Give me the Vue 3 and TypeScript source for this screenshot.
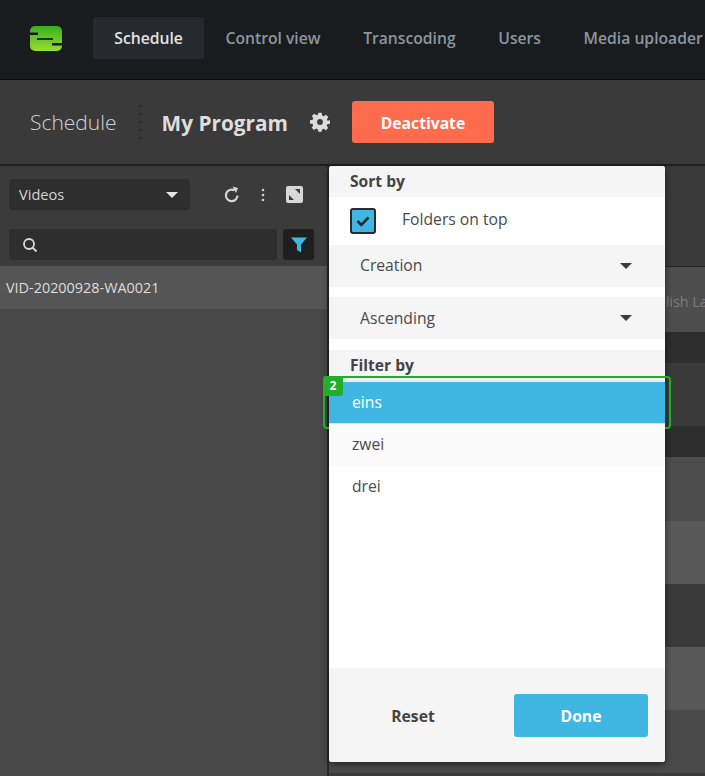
<script setup lang="ts">
const tabs: string[] = ['Schedule', 'Control view', 'Transcoding', 'Users', 'Media uploader']
const stripes: { h: number; c: string }[] = [
  { h: 65, c: '#4d4d4d' },
  { h: 31, c: '#2d2d2d' },
  { h: 63, c: '#3a3a3a' },
  { h: 31, c: '#2d2d2d' },
  { h: 64, c: '#4d4d4d' },
  { h: 63, c: '#585858' },
  { h: 63, c: '#3a3a3a' },
  { h: 63, c: '#585858' },
  { h: 63, c: '#4a4a4a' }
]
</script>

<template>
  <div class="app">
    <header class="topbar">
      <svg class="logo" width="32" height="25" viewBox="0 0 32 25">
        <defs>
          <linearGradient id="lg" x1="0" y1="0" x2="0" y2="1">
            <stop offset="0" stop-color="#35b01f" />
            <stop offset="1" stop-color="#9bdc2f" />
          </linearGradient>
        </defs>
        <rect width="32" height="25" rx="5" fill="url(#lg)" />
        <rect x="0" y="6.500" width="8" height="2.500" fill="#181c1f" />
        <rect x="7" y="12" width="16" height="2" fill="#22301f" />
        <rect x="22" y="17" width="10" height="2.500" fill="#181c1f" />
      </svg>
      <nav class="tabs">
        <span v-for="(t, i) in tabs" :key="t" class="tab" :class="{ active: i === 0 }">{{ t }}</span>
      </nav>
    </header>

    <section class="titlebar">
      <span class="crumb">Schedule</span>
      <span class="dots"></span>
      <span class="program">My Program</span>
      <svg class="gear" width="20" height="20" viewBox="0 0 24 24">
        <path fill="#dcdcdc" fill-rule="evenodd" d="M10 1h4l.6 3.200 1.900.8 2.700-1.800 2.800 2.800-1.800 2.700.8 1.900L24 10v4l-3.200.6-.8 1.900 1.800 2.700-2.800 2.800-2.700-1.800-1.900.8L14 23.800h-4l-.6-3.200-1.900-.8-2.700 1.800-2.800-2.800 1.800-2.700-.8-1.900L0 14v-4l3.200-.6.8-1.900L2.200 4.800 5 2l2.700 1.800 1.900-.8zM12 8.500a3.500 3.500 0 1 0 0 7 3.500 3.500 0 0 0 0-7z" />
      </svg>
      <button class="deactivate">Deactivate</button>
    </section>

    <main class="main">
      <aside class="left">
        <div class="left-tools">
          <div class="row-one">
            <div class="select-dark">
              <span class="videos">Videos</span>
              <span class="caret light"></span>
            </div>
            <div class="tool-icons">
              <svg width="18" height="18" viewBox="0 0 18 18">
                <path d="M14.500 9.500a5.800 5.800 0 1 1-3-5.200" fill="none" stroke="#d6d6d6" stroke-width="2.200" />
                <path d="M9.500 0.500l5.500 1.500-2 5z" fill="#d6d6d6" />
              </svg>
              <svg class="kebab" width="4" height="14" viewBox="0 0 4 14">
                <circle cx="2" cy="2" r="1.300" fill="#d0d0d0" />
                <circle cx="2" cy="7" r="1.300" fill="#d0d0d0" />
                <circle cx="2" cy="12" r="1.300" fill="#d0d0d0" />
              </svg>
              <svg class="expand" width="17" height="17" viewBox="0 0 17 17">
                <rect width="17" height="17" rx="2" fill="#d8d8d8" />
                <path d="M9 3h5v5zM3 9l5 5H3z" fill="#3a3a3a" />
              </svg>
            </div>
          </div>
          <div class="row-two">
            <div class="search">
              <svg width="16" height="16" viewBox="0 0 16 16">
                <circle cx="7" cy="7" r="5" fill="none" stroke="#d8d8d8" stroke-width="1.800" />
                <path d="M10.500 10.500l4 4" stroke="#d8d8d8" stroke-width="1.800" />
              </svg>
            </div>
            <div class="filter-btn">
              <svg width="16" height="16" viewBox="0 0 16 16">
                <path d="M0 0.500h16L10 7.500V15.500l-4-2.500V7.500z" fill="#3fb8e3" />
              </svg>
            </div>
          </div>
        </div>
        <div class="video-row">VID-20200928-WA0021</div>
      </aside>

      <section class="right">
        <div class="right-head"></div>
        <div class="stripes">
          <div v-for="(s, i) in stripes" :key="i" class="stripe" :style="{ height: s.h + 'px', background: s.c }">
            <span v-if="i === 0" class="stripe-text">English Language</span>
          </div>
        </div>
      </section>

      <div class="popup">
        <div class="heading">Sort by</div>
        <label class="check-row">
          <span class="check">
            <svg width="14" height="12" viewBox="0 0 14 12">
              <path d="M1.500 6l3.800 3.800L12.500 2.500" fill="none" stroke="#1f2a30" stroke-width="2.600" />
            </svg>
          </span>
          <span class="lift">Folders on top</span>
        </label>
        <div class="sel">
          <span class="lift">Creation</span>
          <span class="caret"></span>
        </div>
        <div class="sel second">
          <span>Ascending</span>
          <span class="caret"></span>
        </div>
        <div class="heading filter-heading">Filter by</div>
        <div class="filter-list">
          <div class="opt selected">
            eins
            <div class="highlight"><span class="badge">2</span></div>
          </div>
          <div class="opt tint">zwei</div>
          <div class="opt">drei</div>
        </div>
        <div class="footer">
          <span class="reset">Reset</span>
          <button class="done">Done</button>
        </div>
      </div>
    </main>
  </div>
</template>

<style>
html, body { margin: 0; background: #3a3a3a; }
</style>

<style scoped>
.app {
  width: 705px;
  height: 776px;
  overflow: hidden;
  display: flex;
  flex-direction: column;
  font-family: "Open Sans", "Noto Sans", sans-serif;
  background: #3a3a3a;
}
.topbar {
  height: 79px;
  flex: none;
  background: #181c1f;
  border-bottom: 1px solid #0b0c0d;
  display: flex;
  align-items: flex-start;
  box-sizing: content-box;
}
.logo { margin: 26px 0 0 30px; flex: none; }
.tabs { display: flex; margin: 17px 0 0 31px; white-space: nowrap; }
.tab {
  height: 42px;
  line-height: 42px;
  padding: 0 21.300px;
  font-size: 15.700px;
  font-weight: 600;
  color: #8f949c;
  border-radius: 3px;
}
.tab.active { background: #262a2e; color: #e2e2e2; }

.titlebar {
  height: 84px;
  flex: none;
  background: #3a3a3a;
  border-bottom: 2px solid #1e1e1e;
  display: flex;
  align-items: center;
  padding-left: 30px;
  box-sizing: content-box;
}
.crumb { font-size: 21px; font-weight: 300; color: #d2d2d2; }
.dots {
  width: 1px;
  height: 34px;
  margin: 0 21px 0 23px;
  background: repeating-linear-gradient(to bottom, #1a1a1a 0 2px, transparent 2px 8px);
}
.program { font-size: 20.800px; font-weight: 700; color: #dedede; margin-top: 1px; }
.gear { margin-left: 22px; }
.deactivate {
  margin-left: 22px;
  width: 142px;
  height: 42px;
  border: 0;
  padding: 1px 0 0;
  border-radius: 3px;
  background: #ff6b4d;
  color: #fff;
  font: 700 15.700px "Open Sans", sans-serif;
}

.main { flex: 1; display: flex; position: relative; min-height: 0; }
.left {
  width: 327px;
  flex: none;
  background: #474747;
  border-right: 2px solid #292929;
}
.left-tools {
  height: 100px;
  background: #3b3b3b;
  box-sizing: border-box;
  padding: 13px 13px 0 9px;
}
.row-one { display: flex; align-items: center; }
.select-dark {
  width: 181px;
  height: 31px;
  box-sizing: border-box;
  padding: 0 12px 0 10px;
  background: #2e2e2e;
  border-radius: 4px;
  display: flex;
  align-items: center;
  justify-content: space-between;
  font-size: 14.600px;
  color: #d4d4d4;
}
.videos { margin-bottom: 2px; }
.tool-icons {
  display: flex;
  align-items: center;
  margin-left: 33px;
}
.kebab { margin-left: 20px; }
.expand { margin-left: 21px; }
.row-two { display: flex; gap: 6px; margin-top: 19px; }
.search {
  width: 268px;
  height: 31px;
  background: #2e2e2e;
  border-radius: 3px;
  display: flex;
  align-items: center;
  padding-left: 13px;
  box-sizing: border-box;
}
.filter-btn {
  width: 31px;
  height: 31px;
  background: #1f1f1f;
  border-radius: 3px;
  display: flex;
  align-items: center;
  justify-content: center;
}
.video-row {
  height: 43px;
  line-height: 43px;
  padding-left: 6px;
  background: #555;
  color: #dcdcdc;
  font-size: 14.400px;
}
.right { flex: 1; min-width: 0; }
.right-head { height: 101px; background: #3a3a3a; border-bottom: 1px solid #242424; box-sizing: border-box; }
.stripe { position: relative; overflow: hidden; }
.stripe-text {
  display: block;
  white-space: nowrap;
  line-height: 65px;
  padding-left: 312px;
  margin-top: 2px;
  font-size: 14.400px;
  color: #7d7d7d;
}

.caret {
  width: 0;
  height: 0;
  border-left: 6px solid transparent;
  border-right: 6px solid transparent;
  border-top: 6.500px solid #3c3c3c;
}
.caret.light { border-top-color: #e6e6e6; }

.popup {
  position: absolute;
  left: 329px;
  top: 0;
  width: 336px;
  height: 596px;
  background: #fff;
  border-radius: 3px;
  box-shadow: 0 2px 6px rgba(0, 0, 0, 0.55);
  display: flex;
  flex-direction: column;
  color: #4a4a4a;
  font-size: 15.700px;
}
.heading {
  height: 31px;
  line-height: 31px;
  padding-left: 21px;
  background: #f5f5f5;
  font-weight: 700;
  font-size: 15.600px;
  color: #444;
  border-radius: 3px 3px 0 0;
  flex: none;
}
.check-row {
  height: 48px;
  flex: none;
  display: flex;
  align-items: center;
  padding-left: 21px;
  gap: 26px;
  box-sizing: border-box;
}
.check-row .lift { margin-bottom: 4px; }
.sel .lift { margin-bottom: 2px; }
.check {
  width: 26px;
  height: 26px;
  box-sizing: border-box;
  background: #40b7e2;
  border: 2.500px solid #2b2b2b;
  border-radius: 3px;
  display: flex;
  align-items: center;
  justify-content: center;
}
.sel {
  height: 42px;
  flex: none;
  background: #f5f5f5;
  display: flex;
  align-items: center;
  justify-content: space-between;
  padding: 0 33px 0 31px;
}
.sel.second { margin-top: 10px; }
.filter-heading { margin-top: 11px; height: 30px; line-height: 30px; border-radius: 0; }
.filter-list { flex: 1; }
.opt {
  height: 42px;
  line-height: 40px;
  padding-left: 23px;
  position: relative;
}
.opt.selected {
  background: #40b7e2;
  color: #fff;
  border-top: 2px solid #e3f2f8;
  border-bottom: 1px solid #c4e8f5;
  height: 44px;
  line-height: 41px;
  box-sizing: border-box;
}
.opt.tint { background: #fbfbfb; }
.highlight {
  position: absolute;
  left: -6px;
  right: -6px;
  top: -6px;
  bottom: -6px;
  border: 2px solid #22ad2b;
  border-radius: 4px;
  pointer-events: none;
}
.badge {
  position: absolute;
  left: -2px;
  top: -2px;
  width: 20px;
  height: 20px;
  line-height: 20px;
  background: #22ad2b;
  color: #fff;
  font-size: 12px;
  font-weight: 700;
  text-align: center;
  border-radius: 3px 0 3px 0;
}
.footer {
  height: 94px;
  flex: none;
  background: #f5f5f5;
  border-radius: 3px;
  display: flex;
  align-items: center;
  box-sizing: border-box;
  padding: 0 17px 0 0;
}
.reset {
  width: 168px;
  text-align: center;
  font-weight: 700;
  color: #444;
  margin-right: 17px;
  margin-top: 2px;
}
.done {
  width: 134px;
  height: 43px;
  border: 0;
  padding: 1px 0 0;
  border-radius: 3px;
  background: #40b7e2;
  color: #fff;
  font: 700 15.700px "Open Sans", sans-serif;
}
</style>
